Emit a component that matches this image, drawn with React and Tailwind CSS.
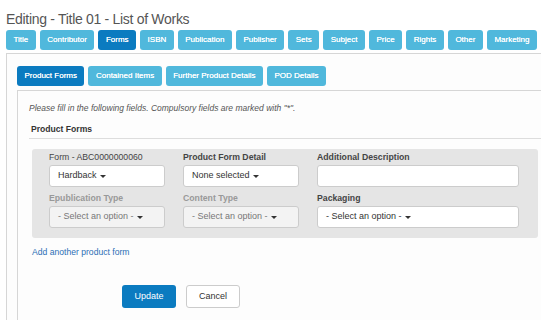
import React from 'react';

const tabs = ['Title', 'Contributor', 'Forms', 'ISBN', 'Publication', 'Publisher', 'Sets', 'Subject', 'Price', 'Rights', 'Other', 'Marketing'];
const subTabs = ['Product Forms', 'Contained Items', 'Further Product Details', 'POD Details'];

const Caret = () => (
    <span className="inline-block ml-[3px] align-middle w-0 h-0 border-l-[3px] border-r-[3px] border-t-[3px] border-l-transparent border-r-transparent border-t-[#333]" />
);

const SelectBox = ({ label, value, disabled, width, boldLabel = true }) => (
    <div className="flex flex-col" style={{ width }}>
        <p className={`text-[8.7px] leading-[12px] h-[13px] ${boldLabel ? 'font-bold' : ''} ${disabled ? 'text-[#999]' : 'text-[#444]'}`}>
            {label}
        </p>
        <div className={`mt-[1px] h-[22px] rounded-[3px] border border-[#ccc] flex items-center px-[8px] text-[9px] ${disabled ? 'bg-[#f3f3f3] text-[#777]' : 'bg-white text-[#333]'}`}>
            {value}
            {value && <Caret />}
        </div>
    </div>
);

const App = () => {
    return (
        <div className="w-[541px] h-[320px] overflow-hidden bg-white font-['Liberation_Sans',Arial,sans-serif]">
            <h1 className="pl-[6px] pt-[10px] text-[14px] leading-[18px] text-[#555] tracking-[-0.3px]">
                Editing - Title 01 - List of Works
            </h1>
            <div className="flex gap-[4px] pl-[6px] mt-[2px] w-[600px]">
                {tabs.map((t) => (
                    <div
                        key={t}
                        className={`h-[20px] px-[7.5px] flex items-center rounded-[3px] text-[8px] text-white [text-shadow:0_0_0.6px_#fff] ${t === 'Forms' ? 'bg-[#0b7bc0]' : 'bg-[#50b8dc]'}`}
                    >
                        {t}
                    </div>
                ))}
                <div className="h-[20px] w-[30px] rounded-[3px] bg-[#50b8dc]" />
            </div>

            <div className="ml-[6px] mt-[3px] w-[600px] border-l border-t border-[#d6d6d6] bg-[#fdfdfd] pl-[10px] pt-[12px] h-[300px]">
                <div className="flex gap-[4px]">
                    {subTabs.map((t, i) => (
                        <div
                            key={t}
                            className={`h-[20px] px-[7.5px] flex items-center rounded-[3px] text-[8px] text-white [text-shadow:0_0_0.6px_#fff] ${i === 0 ? 'bg-[#0b7bc0]' : 'bg-[#50b8dc]'}`}
                        >
                            {t}
                        </div>
                    ))}
                </div>

                <div className="mt-[4px] border-l border-t border-[#d6d6d6] bg-[#fdfdfd] h-[260px] pl-[11px]">
                    <p className="pt-[12px] text-[8.5px] leading-[10px] italic text-[#555]">
                        Please fill in the following fields. Compulsory fields are marked with "*".
                    </p>
                    <div className="mt-[11px] border-b border-[#ddd] pb-[3px] w-[520px]">
                        <p className="pl-[2px] text-[8.6px] leading-[11px] font-bold text-[#333]">Product Forms</p>
                    </div>

                    <div className="mt-[10px] ml-[3px] w-[506px] rounded-[3px] bg-[#e5e5e5] pl-[17px] pt-[2px] pb-[10px] flex flex-col gap-[5px]">
                        <div className="flex gap-[18px]">
                            <SelectBox label="Form - ABC0000000060" value="Hardback" width={116} boldLabel={false} />
                            <SelectBox label="Product Form Detail" value="None selected" width={116} />
                            <SelectBox label="Additional Description" value="" width={202} />
                        </div>
                        <div className="flex gap-[18px]">
                            <SelectBox label="Epublication Type" value="- Select an option -" width={116} disabled />
                            <SelectBox label="Content Type" value="- Select an option -" width={116} disabled />
                            <SelectBox label="Packaging" value="- Select an option -" width={202} />
                        </div>
                    </div>

                    <p className="mt-[9px] ml-[3px] text-[8.6px] leading-[11px] text-[#2c6fb5]">Add another product form</p>

                    <div className="mt-[27px] ml-[93px] flex gap-[10px]">
                        <button className="w-[54px] h-[23px] rounded-[3px] bg-[#0b7bc0] text-white text-[9px]">Update</button>
                        <button className="w-[54px] h-[23px] rounded-[3px] bg-white border border-[#ccc] text-[#333] text-[9px]">Cancel</button>
                    </div>
                </div>
            </div>
        </div>
    );
};

export default App;
